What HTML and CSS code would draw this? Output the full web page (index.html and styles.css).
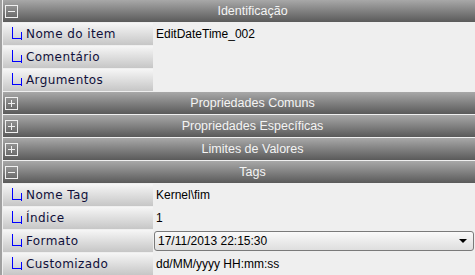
FILE: index.html
```html
<!DOCTYPE html>
<html lang="pt">
<head>
    <meta charset="UTF-8">
    <title>Propriedades</title>
    <link rel="stylesheet" href="styles.css">
</head>
<body>
    <div class="grid">
        <!-- Identificação -->
        <div class="group">
            <span class="toggle minus"></span>
            <span class="group-title">Identificação</span>
        </div>
        <div class="row">
            <div class="label"><span class="branch"></span>Nome do item</div>
            <div class="value">EditDateTime_002</div>
        </div>
        <div class="row">
            <div class="label"><span class="branch"></span>Comentário</div>
            <div class="value"></div>
        </div>
        <div class="row">
            <div class="label"><span class="branch"></span>Argumentos</div>
            <div class="value"></div>
        </div>

        <div class="group">
            <span class="toggle plus"></span>
            <span class="group-title">Propriedades Comuns</span>
        </div>
        <div class="group">
            <span class="toggle plus"></span>
            <span class="group-title">Propriedades Específicas</span>
        </div>
        <div class="group">
            <span class="toggle plus"></span>
            <span class="group-title">Limites de Valores</span>
        </div>

        <!-- Tags -->
        <div class="group">
            <span class="toggle minus"></span>
            <span class="group-title">Tags</span>
        </div>
        <div class="row">
            <div class="label"><span class="branch"></span>Nome Tag</div>
            <div class="value">Kernel\fim</div>
        </div>
        <div class="row">
            <div class="label"><span class="branch"></span>Índice</div>
            <div class="value">1</div>
        </div>
        <div class="row">
            <div class="label"><span class="branch"></span>Formato</div>
            <div class="value">
                <div class="combo">
                    <span>17/11/2013 22:15:30</span>
                    <span class="arrow"></span>
                </div>
            </div>
        </div>
        <div class="row">
            <div class="label"><span class="branch"></span>Customizado</div>
            <div class="value">dd/MM/yyyy HH:mm:ss</div>
        </div>
    </div>
</body>
</html>
```

FILE: styles.css
```css
body {
    margin: 0;
    padding: 0;
    background-color: #efefef;
    font-family: "DejaVu Sans", Verdana, sans-serif;
    font-size: 12px;
    overflow: hidden;
}

.grid {
    display: flex;
    flex-direction: column;
    gap: 1px;
    width: 475px;
    box-sizing: border-box;
    border-left: 2px solid #a0a0a0;
    padding-left: 1px;
    background-color: #efefef;
}

.group {
    display: flex;
    align-items: center;
    height: 22px;
    background: linear-gradient(#a8a8a8, #5a5a5a);
    color: #f4f4f4;
    font-family: "Liberation Sans", Arial, sans-serif;
    font-size: 12.5px;
}

.toggle {
    position: relative;
    width: 11px;
    height: 11px;
    margin-left: 2px;
    margin-right: 12px;
    border: 1px solid #f0f0f0;
}

.toggle::before,
.toggle.plus::after {
    content: "";
    position: absolute;
    background-color: #f0f0f0;
}

.toggle::before {
    left: 2px;
    right: 2px;
    top: 5px;
    height: 1px;
}

.toggle.plus::after {
    top: 2px;
    bottom: 2px;
    left: 5px;
    width: 1px;
}

.group-title {
    flex: 1;
    text-align: center;
}

.row {
    display: flex;
    height: 22px;
}

.label {
    display: flex;
    align-items: center;
    width: 150px;
    background: linear-gradient(#f6f6f6, #c6c6c6);
    color: #10103a;
    letter-spacing: 0.4px;
}

.branch {
    position: relative;
    flex: none;
    width: 8px;
    height: 11px;
    margin-left: 9px;
    margin-right: 5px;
    margin-top: -2px;
    border-left: 1px solid #0000ff;
    border-bottom: 1px solid #0000ff;
}

.branch::after {
    content: "";
    position: absolute;
    right: -1px;
    bottom: -2px;
    width: 1px;
    height: 8px;
    background-color: #0000ff;
}

.value {
    flex: 1;
    display: flex;
    align-items: center;
    padding-left: 3px;
    color: #000;
    font-family: "Liberation Sans", Arial, sans-serif;
}

.combo {
    display: flex;
    align-items: center;
    justify-content: space-between;
    box-sizing: border-box;
    width: 320px;
    height: 20px;
    margin-left: -2px;
    padding: 0 6px 0 3px;
    border: 1px solid #7a7a7a;
    border-radius: 3px;
    background: linear-gradient(#fafafa, #dedede);
}

.arrow {
    width: 0;
    height: 0;
    border-left: 4px solid transparent;
    border-right: 4px solid transparent;
    border-top: 4px solid #000;
}
```
